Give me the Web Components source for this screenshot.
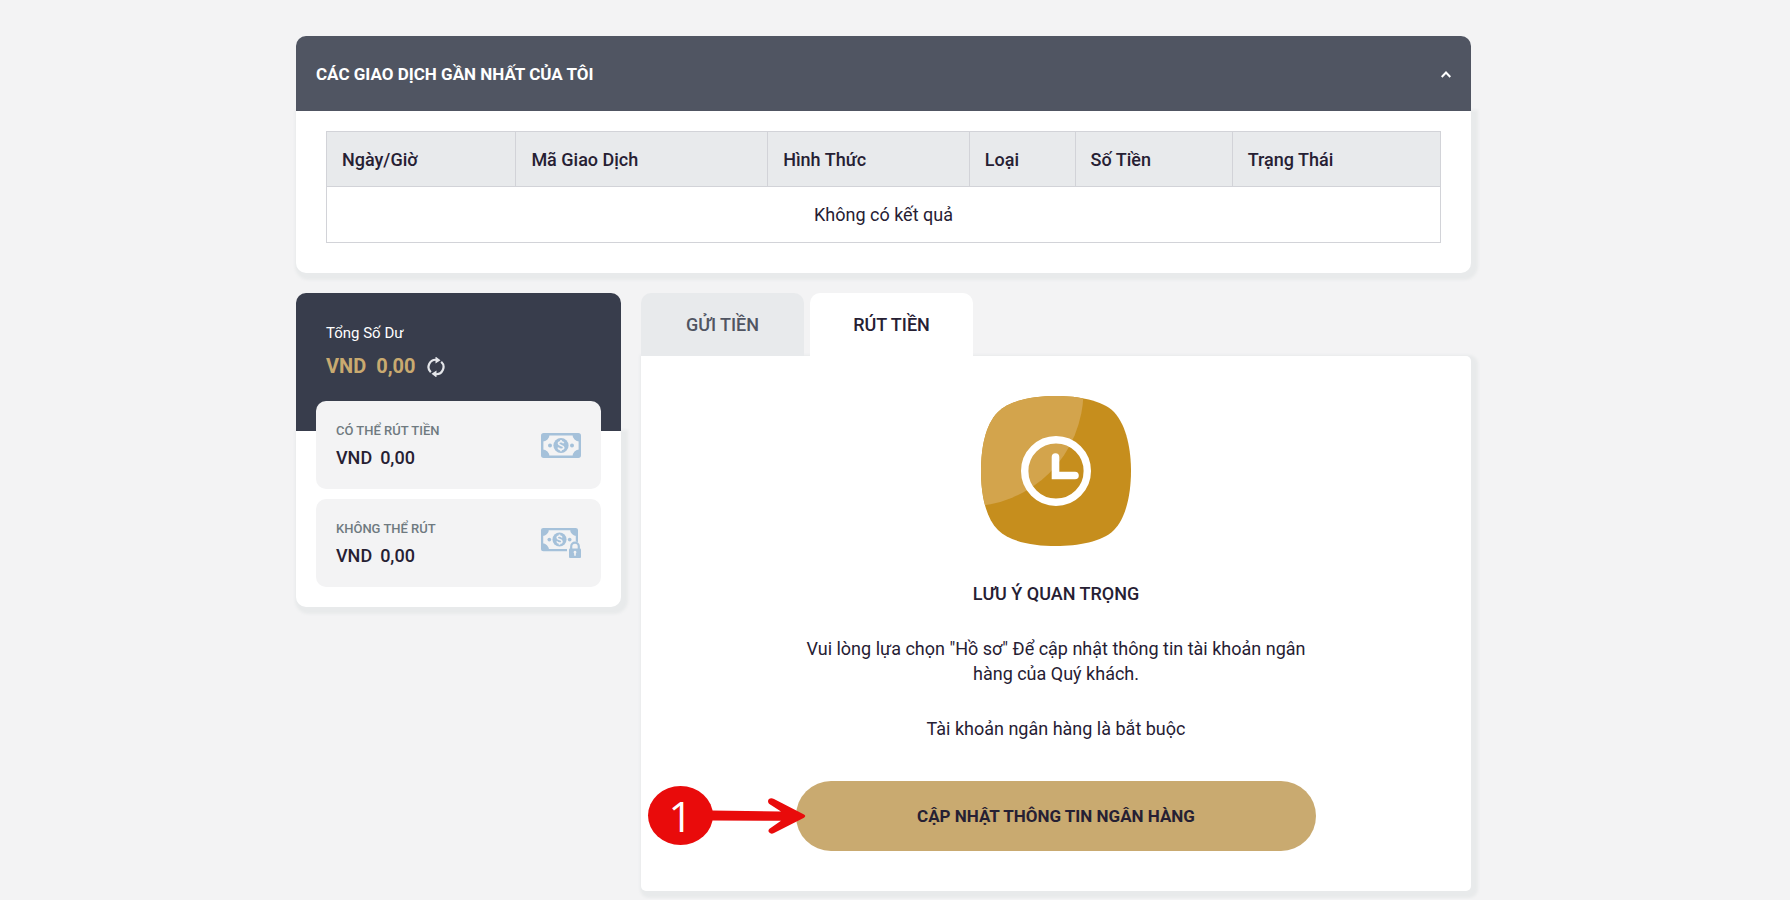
<!DOCTYPE html>
<html lang="vi">
<head>
<meta charset="utf-8">
<meta name="viewport" content="width=device-width, initial-scale=1">
<title>Rút tiền</title>
<style>
  body {
    margin: 0;
    background: #f3f3f4;
    color: #262033;
    font: 400 18px/25px Roboto, "Liberation Sans", sans-serif;
    --dark: #383d4c;
    --slate: #505562;
    --tint: #e8eaec;
    --gold: #c9aa70;
    --line: #d2d3d8;
    --radius: 10px;
    --shadow: 3px 3px 3px 4px #e8eaeb;
  }
</style>
</head>
<body>
<cashier-page>
  <collapsible-card slot="history" heading="CÁC GIAO DỊCH GẦN NHẤT CỦA TÔI">
    <transaction-table></transaction-table>
  </collapsible-card>
  <balance-card slot="balance" label="Tổng Số Dư" amount="0,00">
    <balance-row label="CÓ THỂ RÚT TIỀN" amount="0,00"><cash-icon slot="icon"></cash-icon></balance-row>
    <balance-row label="KHÔNG THỂ RÚT" amount="0,00"><cash-icon slot="icon" locked></cash-icon></balance-row>
  </balance-card>
  <cashier-tabs slot="main">
    <bank-notice>
      <clock-badge slot="icon"></clock-badge>
      <span slot="title">LƯU Ý QUAN TRỌNG</span>
      <span slot="text">Vui lòng lựa chọn "Hồ sơ" Để cập nhật thông tin tài khoản ngân hàng của Quý khách.</span>
      <span slot="note">Tài khoản ngân hàng là bắt buộc</span>
      <span slot="action">CẬP NHẬT THÔNG TIN NGÂN HÀNG</span>
      <step-marker slot="marker">1</step-marker>
    </bank-notice>
  </cashier-tabs>
</cashier-page>

<script>
const define = (name, render, setup) => customElements.define(name, class extends HTMLElement {
  constructor() {
    super();
    this.attachShadow({ mode: 'open' });
  }
  connectedCallback() {
    const template = document.createElement('template');
    template.innerHTML = render(this);
    this.shadowRoot.replaceChildren(template.content.cloneNode(true));
    if (setup) setup(this.shadowRoot, this);
  }
});

define('cashier-page', () => `
  <style>
    :host { display: block; padding: 36px 23px 8px 0; }
    main { max-width: 1175px; margin: 0 auto; display: grid; gap: 20px; }
    .columns { display: grid; grid-template-columns: 325px minmax(0, 1fr); gap: 20px; align-items: start; }
    @media (max-width: 900px) { .columns { grid-template-columns: 1fr; } }
  </style>
  <main>
    <slot name="history"></slot>
    <div class="columns"><slot name="balance"></slot><slot name="main"></slot></div>
  </main>`);

define('collapsible-card', el => `
  <style>
    :host { display: block; }
    h2 { margin: 0; font-size: 17px; font-weight: 700; }
    button {
      display: flex; align-items: center; justify-content: space-between;
      width: 100%; height: 75px; padding: 2px 20px 0; border: 0; box-sizing: border-box;
      border-radius: var(--radius) var(--radius) 0 0;
      background: var(--slate); color: #fff; font: inherit;
      position: relative; cursor: pointer;
    }
    .body {
      padding: 20px 30px 30px; background: #fff; box-shadow: var(--shadow);
      border-radius: 0 0 var(--radius) var(--radius);
    }
    button[aria-expanded="false"] svg { transform: rotate(180deg); }
  </style>
  <h2><button type="button" aria-expanded="true" aria-controls="body">
    <span>${el.getAttribute('heading')}</span>
    <svg width="10" height="7" viewBox="0 0 10 7" aria-hidden="true"><path d="M0.700 6 5 1.500 9.300 6" fill="none" stroke="#fff" stroke-width="2"/></svg>
  </button></h2>
  <div class="body" id="body"><slot></slot></div>`,
  root => {
    const button = root.querySelector('button');
    button.addEventListener('click', () => {
      const open = button.getAttribute('aria-expanded') !== 'true';
      button.setAttribute('aria-expanded', open);
      root.querySelector('.body').hidden = !open;
    });
  });

define('transaction-table', () => `
  <style>
    :host { display: block; }
    table { width: 100%; border-collapse: collapse; table-layout: fixed; }
    th, td { height: 55px; padding: 0 15px; box-sizing: border-box; border: 1px solid var(--line); }
    th { text-align: left; font-weight: 500; background: var(--tint); }
    td { height: 56px; text-align: center; }
  </style>
  <table>
    <colgroup><col style="width:17%"><col style="width:22.6%"><col style="width:18.1%"><col style="width:9.5%"><col style="width:14.1%"><col></colgroup>
    <thead><tr>
      <th scope="col">Ngày/Giờ</th><th scope="col">Mã Giao Dịch</th><th scope="col">Hình Thức</th>
      <th scope="col">Loại</th><th scope="col">Số Tiền</th><th scope="col">Trạng Thái</th>
    </tr></thead>
    <tbody><tr><td colspan="6">Không có kết quả</td></tr></tbody>
  </table>`);

define('balance-card', el => `
  <style>
    :host { display: block; }
    header {
      height: 138px; padding: 28px 30px 0; box-sizing: border-box; position: relative;
      border-radius: var(--radius) var(--radius) 0 0; background: var(--dark); color: #fff;
      font-size: 15px;
    }
    .total { display: flex; align-items: center; margin-top: 8px; color: var(--gold); font-size: 20px; font-weight: 700; }
    .total span + span { margin-left: 10px; }
    button { display: flex; margin-left: 10px; padding: 0; border: 0; background: none; cursor: pointer; }
    .body {
      display: grid; padding: 0 20px 20px; background: #fff; box-shadow: var(--shadow);
      border-radius: 0 0 var(--radius) var(--radius);
    }
    .rows { display: grid; gap: 10px; margin-top: -30px; position: relative; }
  </style>
  <header>
    <div>${el.getAttribute('label')}</div>
    <div class="total"><span>VND</span><span>${el.getAttribute('amount')}</span>
      <button type="button" aria-label="Làm mới"><svg width="20" height="20" viewBox="0 0 20 20" aria-hidden="true">
        <g fill="none" stroke="#e4e6ea" stroke-width="2.200"><path d="M4.800 15.200A7.200 7.200 0 0 1 10.500 2.800"/><path d="M15.200 4.800A7.200 7.200 0 0 1 9.500 17.200"/></g>
        <path fill="#e4e6ea" d="M9.500 -.5 14.500 3.200 9.500 6.500zM10.500 13.500 5.500 16.800l5 3.700z"/>
      </svg></button>
    </div>
  </header>
  <div class="body"><div class="rows"><slot></slot></div></div>`);

define('balance-row', el => `
  <style>
    :host {
      display: flex; align-items: center; justify-content: space-between;
      min-height: 88px; padding: 0 20px; border-radius: var(--radius);
      background: #f3f3f4; box-sizing: border-box; font-weight: 500;
    }
    .label { font-size: 13px; line-height: 20px; color: #6f7a80; }
    .amount { display: flex; gap: 8px; margin-top: 4px; }
  </style>
  <div class="text">
    <div class="label">${el.getAttribute('label')}</div>
    <div class="amount"><span>VND</span><span>${el.getAttribute('amount')}</span></div>
  </div>
  <slot name="icon"></slot>`);

define('cash-icon', el => {
  const locked = el.hasAttribute('locked');
  const note = `
    <rect x="1.200" y="1.200" width="37.600" height="22.600" rx="1.500" fill="none" stroke="#a5c1da" stroke-width="2.400"/>
    <path fill="#a5c1da" d="M1 1h7.500A7 7 0 0 1 1 8.500zM39 1v7.500A7 7 0 0 1 31.500 1zM1 24v-7.500A7 7 0 0 1 8.500 24zM39 24h-7.500a7 7 0 0 1 7.500-7.500z"/>
    <circle cx="20" cy="12.500" r="7.600" fill="#a5c1da"/><circle cx="9" cy="12.500" r="2" fill="#a5c1da"/><circle cx="31" cy="12.500" r="2" fill="#a5c1da"/>
    <path fill="none" stroke="#f3f3f4" stroke-width="1.700" d="M22.600 10.200C22 8.200 17.500 8.200 17.500 10.500c0 2.400 5.200 1.500 5.200 4 0 2.500-5 2.500-5.500 0M20 7v2M20 16.200v2"/>`;
  const lock = `
    <path fill="#f3f3f4" d="M26 30V19.500h1.500c0-8 13-8 13 0V30z"/>
    <path fill="none" stroke="#a5c1da" stroke-width="2.200" d="M30.200 21v-2.500a3.800 3.800 0 0 1 7.600 0V21"/>
    <rect x="28" y="20.500" width="12" height="9.500" rx="1" fill="#a5c1da"/>
    <path fill="#f3f3f4" d="M34 22.800a1.500 1.500 0 0 1 .8 2.700v2.300h-1.600v-2.300a1.500 1.500 0 0 1 .8-2.700z"/>`;
  return `
  <style>:host { display: block; } svg { display: block; }</style>
  ${locked
    ? `<svg width="40" height="30" viewBox="0 0 40 30" aria-hidden="true"><g transform="scale(.925)">${note}</g>${lock}</svg>`
    : `<svg width="40" height="25" viewBox="0 0 40 25" aria-hidden="true">${note}</svg>`}`;
});

define('cashier-tabs', () => `
  <style>
    :host { display: block; }
    [role="tablist"] { display: flex; gap: 6px; position: relative; }
    button {
      width: 163px; height: 63px; padding: 0; border: 0; cursor: pointer;
      border-radius: var(--radius) var(--radius) 0 0; background: var(--tint);
      color: #505562; font: inherit; font-weight: 500;
    }
    button[aria-selected="true"] { background: #fff; color: #262033; }
    [role="tabpanel"] { background: #fff; box-shadow: var(--shadow); border-radius: 0 5px 5px 5px; }
  </style>
  <div role="tablist">
    <button type="button" role="tab" id="deposit" aria-selected="false">GỬI TIỀN</button>
    <button type="button" role="tab" id="withdraw" aria-selected="true" aria-controls="panel">RÚT TIỀN</button>
  </div>
  <div role="tabpanel" id="panel" aria-labelledby="withdraw"><slot></slot></div>`);

define('bank-notice', () => `
  <style>
    :host { display: flex; flex-direction: column; align-items: center; padding: 40px 20px; text-align: center; }
    h3 { margin: 35px 0 30px; font-size: 18px; font-weight: 500; }
    p { margin: 0 0 30px; max-width: 520px; }
    p + p { margin-bottom: 40px; }
    .action { position: relative; width: 100%; max-width: 520px; }
    button {
      width: 100%; height: 70px; border: 0; border-radius: 35px; cursor: pointer;
      background: var(--gold); color: #262033; font: inherit; font-size: 17px; font-weight: 700;
    }
    slot[name="marker"] { display: block; position: absolute; right: 100%; top: 5px; margin-right: -10px; }
  </style>
  <slot name="icon"></slot>
  <h3><slot name="title"></slot></h3>
  <p><slot name="text"></slot></p>
  <p><slot name="note"></slot></p>
  <div class="action">
    <button type="button"><slot name="action"></slot></button>
    <slot name="marker"></slot>
  </div>`);

define('clock-badge', () => `
  <style>:host { display: block; } svg { display: block; }</style>
  <svg width="150" height="150" viewBox="0 0 150 150" aria-hidden="true">
    <defs><clipPath id="shape"><path d="M75 0C97 0 121 4 133 16 146 30 150 55 150 75S146 121 133 134C121 146 97 150 75 150S29 146 17 134C4 121 0 97 0 75S4 29 17 16C29 4 53 0 75 0z"/></clipPath></defs>
    <g clip-path="url(#shape)">
      <rect width="150" height="150" fill="#c68e1d"/>
      <circle cx="-13" cy="-5" r="115.500" fill="#d3a44c"/>
    </g>
    <circle cx="75" cy="75" r="31.300" fill="none" stroke="#fff" stroke-width="7.400"/>
    <path d="M74.500 61v18.500H94" fill="none" stroke="#fff" stroke-width="7.600" stroke-linecap="round"/>
  </svg>`);

define('step-marker', () => `
  <style>
    :host { display: flex; align-items: center; width: 158px; color: #fff; font: 400 42px/59px "Open Sans", "Noto Sans", sans-serif; }
    .disc { width: 65px; height: 59px; border-radius: 50%; background: #e90b0b; text-align: center; }
    svg { display: block; margin-left: -2px; }
  </style>
  <div class="disc"><slot></slot></div>
  <svg width="95" height="36" viewBox="0 0 95 36" aria-hidden="true">
    <path d="M0 12.500 70 13.500 58 5.800Q56 3 58 1 60-.5 63 1L93 16.500Q95.500 18 93 19.800L63 35Q60 36.500 58.300 34.500 56.500 32.500 58.500 30.800L70 22.800 0 22.500z" fill="#e90b0b"/>
  </svg>`);
</script>
</body>
</html>
